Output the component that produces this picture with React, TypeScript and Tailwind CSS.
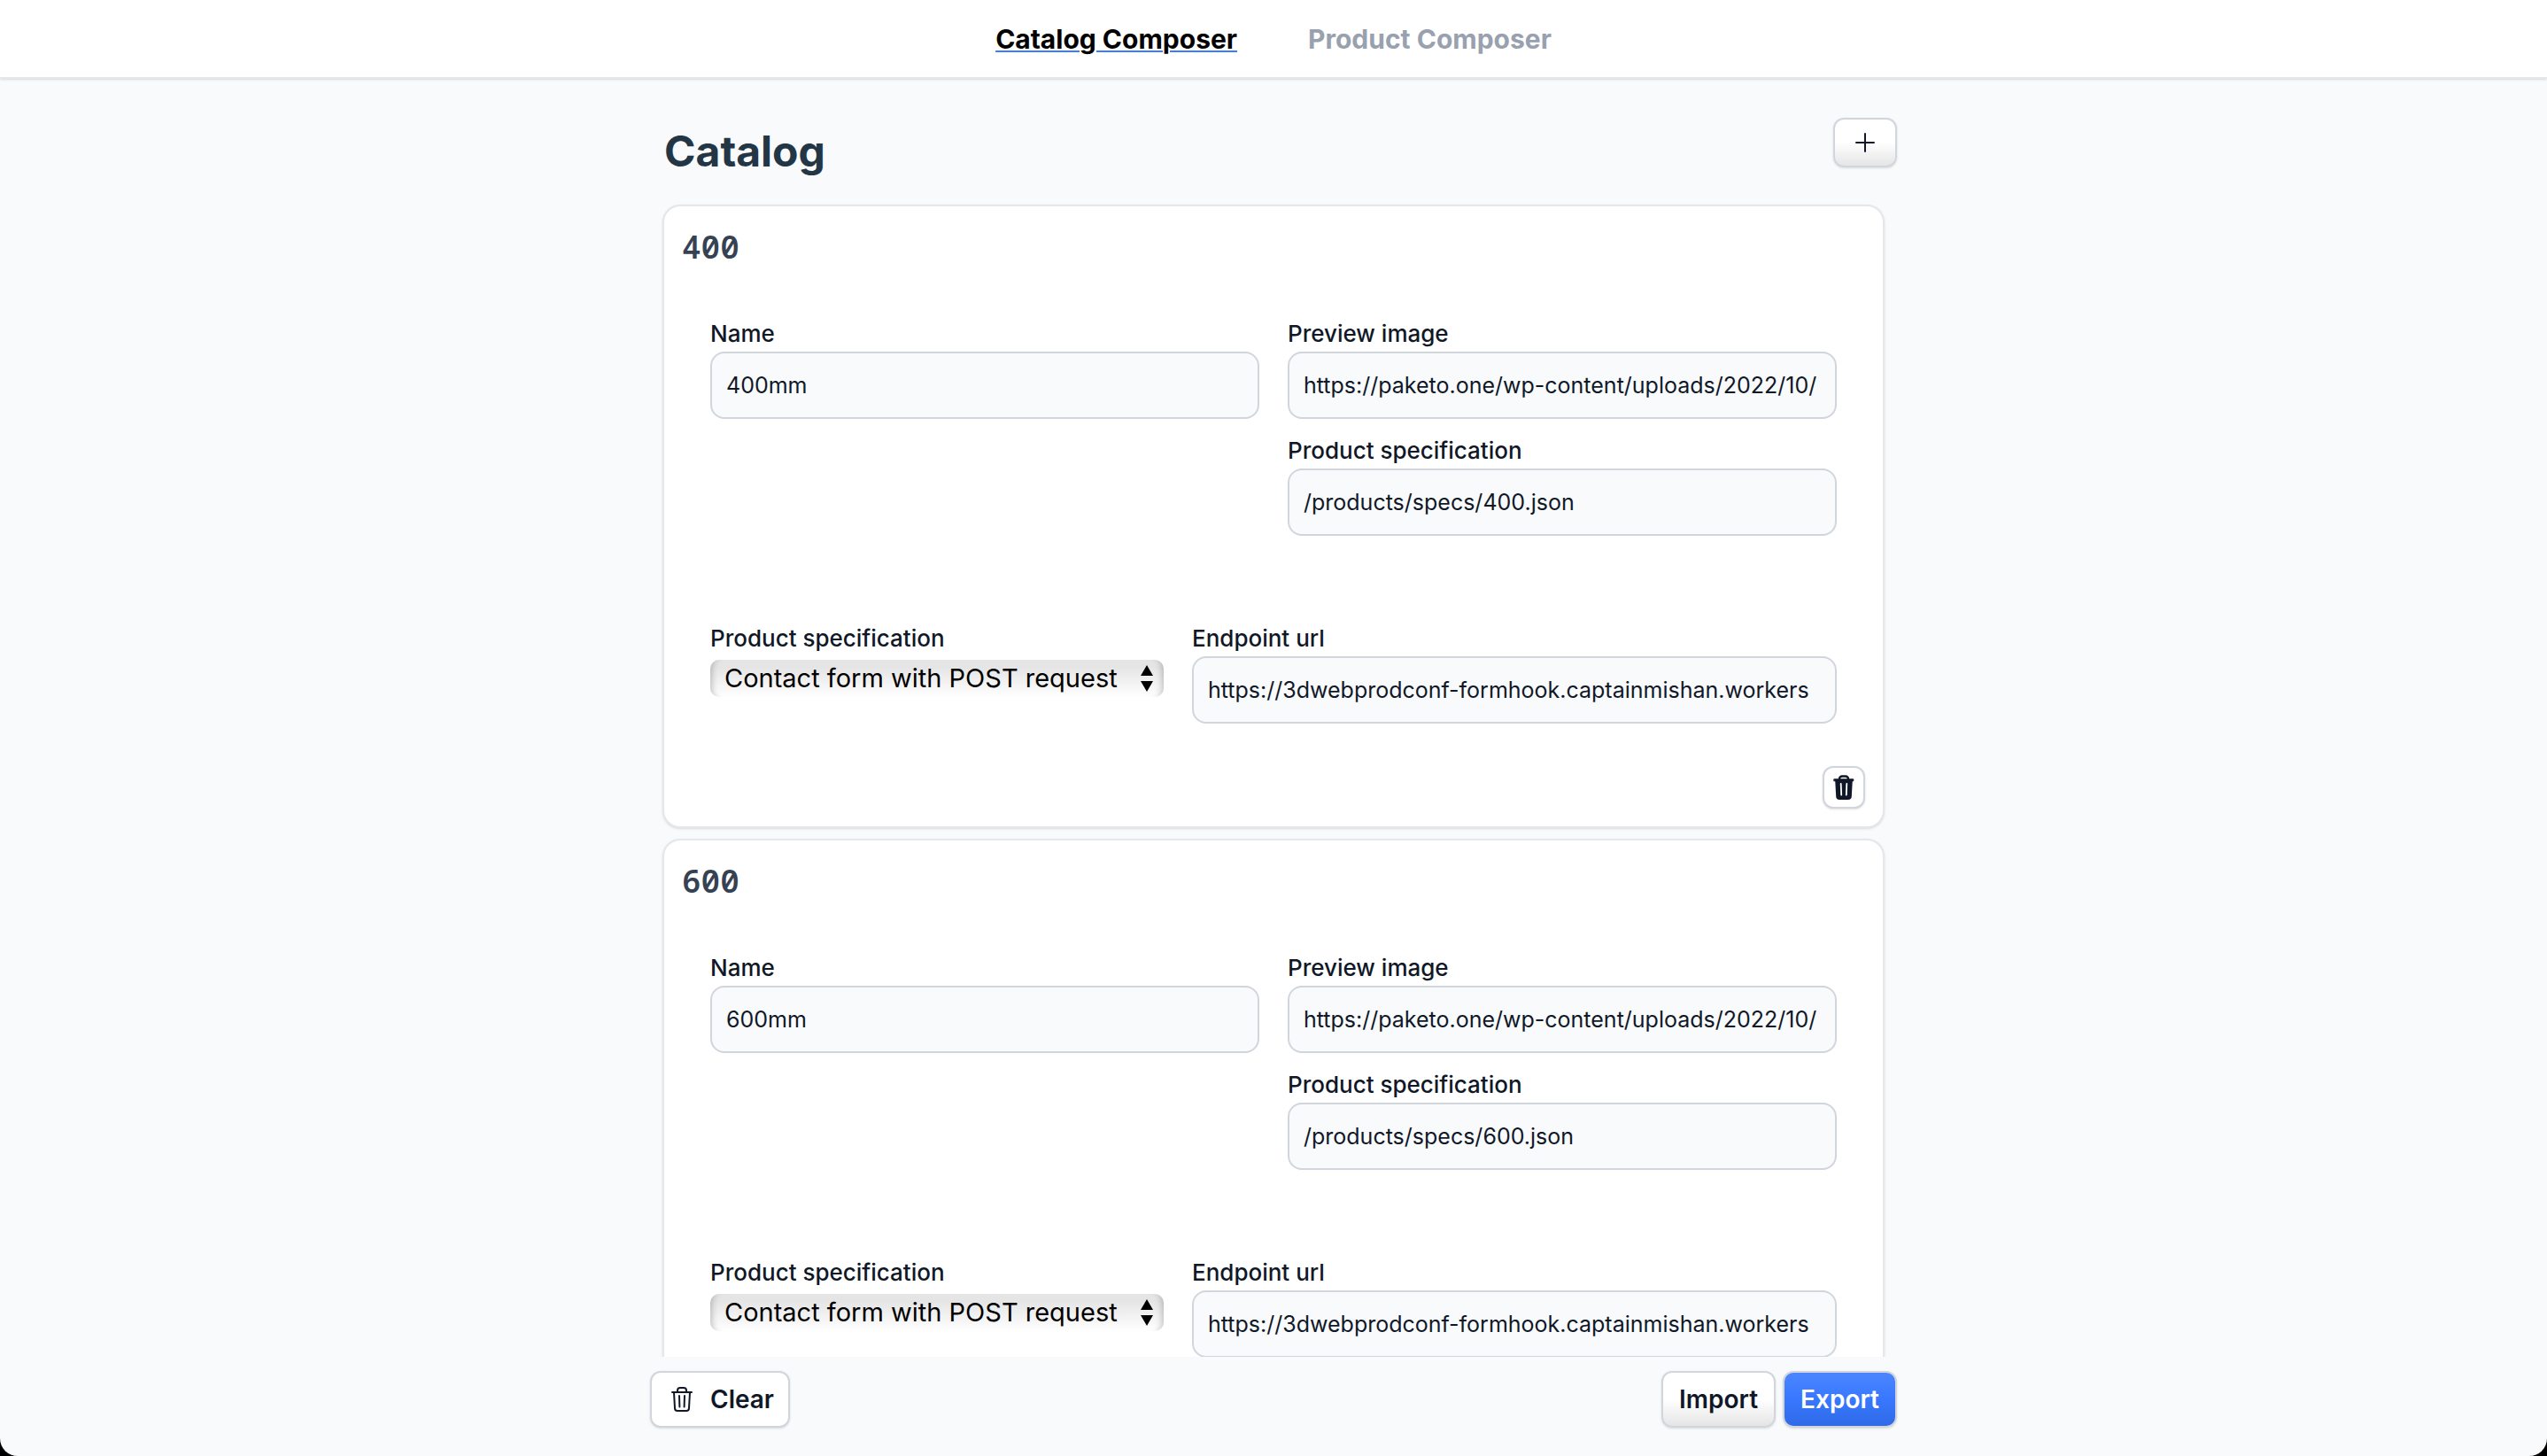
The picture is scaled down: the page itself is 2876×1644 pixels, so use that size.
import { useId, useState } from "react";
import type { ReactNode } from "react";

type Product = { id: string; name: string; preview: string; spec: string; endpoint: string };

const PRODUCTS: Product[] = ["400", "600"].map((id) => ({
  id,
  name: `${id}mm`,
  preview: "https://paketo.one/wp-content/uploads/2022/10/",
  spec: `/products/specs/${id}.json`,
  endpoint: "https://3dwebprodconf-formhook.captainmishan.workers",
}));

function TrashOutline() {
  return (
    <svg viewBox="0 0 24 28" className="h-7 w-6" fill="none" stroke="currentColor" strokeWidth="2" strokeLinecap="round" strokeLinejoin="round" aria-hidden="true">
      <path d="M1 6h22" />
      <path d="M7 6V4a3 3 0 0 1 3-3h4a3 3 0 0 1 3 3v2" />
      <path d="M3 6l1 18a3 3 0 0 0 3 3h10a3 3 0 0 0 3-3l1-18" />
      <path d="M9 10l.4 12.5M15 10l-.4 12.5" />
    </svg>
  );
}

function TrashFilled() {
  return (
    <svg viewBox="0 0 24 28" className="h-7 w-6" fill="none" strokeLinecap="round" strokeLinejoin="round" aria-hidden="true">
      <path d="M7 6V4.500a3 3 0 0 1 3-3h4a3 3 0 0 1 3 3V6" stroke="currentColor" strokeWidth="2.400" />
      <path d="M1.200 4.800h21.600v2H1.200z" fill="currentColor" stroke="currentColor" strokeWidth="1" />
      <path d="M2.200 6h19.600l-1 18.200a4 4 0 0 1-4 3.800H7.200a4 4 0 0 1-4-3.800z" fill="currentColor" />
      <path d="M8.700 10l.5 12.500M15.300 10l-.5 12.500" stroke="#fff" strokeWidth="1.800" />
    </svg>
  );
}

function TextField({ label, value, className = "" }: { label: string; value: string; className?: string }) {
  const id = useId();
  return (
    <div className={`flex min-w-0 flex-col gap-1 ${className}`}>
      <label htmlFor={id} className="text-[26px] leading-8 font-medium">{label}</label>
      <input
        id={id}
        type="text"
        defaultValue={value}
        className="h-[76px] w-full rounded-2xl border-2 border-gray-300 bg-[#f9fafc] px-4 text-[25px] text-gray-900 outline-none"
      />
    </div>
  );
}

function SubmitSelect() {
  const id = useId();
  return (
    <div className="flex min-w-0 flex-col gap-2">
      <label htmlFor={id} className="text-[26px] leading-8 font-medium">Product specification</label>
      <div className="relative h-[42px]">
        <select
          id={id}
          className="h-full w-full appearance-none rounded-[10px] bg-linear-to-b from-[#e5e5e5] from-20% to-white px-4 text-[29px] leading-[42px] text-black shadow-[inset_9px_0_7px_-7px_rgba(0,0,0,0.22),inset_-9px_0_7px_-7px_rgba(0,0,0,0.22)] outline-none"
        >
          <option>Contact form with POST request</option>
        </select>
        <svg viewBox="0 0 14 30" className="pointer-events-none absolute top-1.5 right-3 h-[30px] w-3.5" fill="#000" aria-hidden="true">
          <path d="M7 0l7 12H0zM7 30l7-12H0z" />
        </svg>
      </div>
    </div>
  );
}

function ProductCard({ product, onDelete }: { product: Product; onDelete: () => void }) {
  return (
    <section className="rounded-[20px] border-2 border-gray-200 bg-white px-5 pt-7 pb-5 shadow-sm">
      <h2 className="font-['Noto_Sans_Mono','DejaVu_Sans_Mono',monospace] text-4xl leading-9 font-semibold text-gray-700">{product.id}</h2>
      <div className="mt-16 grid grid-cols-2 gap-x-8 gap-y-5 px-8">
        <TextField label="Name" value={product.name} />
        <TextField label="Preview image" value={product.preview} />
        <TextField label="Product specification" value={product.spec} className="col-start-2" />
      </div>
      <div className="mt-[100px] grid grid-cols-[512fr_728fr] gap-8 px-8">
        <SubmitSelect />
        <TextField label="Endpoint url" value={product.endpoint} />
      </div>
      <div className="mt-12 flex justify-end">
        <button type="button" aria-label={`Delete ${product.id}`} onClick={onDelete} className="grid size-12 place-items-center rounded-xl border-2 border-gray-300 bg-white shadow-sm">
          <TrashFilled />
        </button>
      </div>
    </section>
  );
}

function ActionButton({ className, children, onClick }: { className: string; children: ReactNode; onClick?: () => void }) {
  return (
    <button type="button" onClick={onClick} className={`flex h-16 items-center rounded-xl border-2 border-gray-300 text-[28px] font-semibold shadow-sm ${className}`}>
      {children}
    </button>
  );
}

export default function App() {
  const [products, setProducts] = useState(PRODUCTS);
  return (
    <div className="h-screen bg-black">
      <div className="flex h-full flex-col overflow-hidden rounded-b-[20px] bg-[#f9fafc] font-['Inter',sans-serif] text-gray-900">
        <header className="z-10 border-b-2 border-gray-200 bg-white shadow-sm">
          <nav className="flex h-[87px] items-center justify-center gap-20 text-3xl font-bold">
            <a href="#catalog" aria-current="page" className="text-black underline decoration-[#3b7cff] decoration-2 underline-offset-2">Catalog Composer</a>
            <a href="#product" className="text-gray-400">Product Composer</a>
          </nav>
        </header>

        <main className="min-h-0 flex-1 overflow-y-auto [scrollbar-width:none]">
          <div className="mx-auto max-w-[1408px] pt-11">
            <div className="flex min-h-[98px] items-start justify-between pl-4">
              <h1 className="mt-3.5 text-5xl leading-none font-bold text-[#233646]">Catalog</h1>
              <button type="button" aria-label="Add product" className="grid h-14 w-[72px] place-items-center rounded-xl border-2 border-gray-300 bg-linear-to-b from-white from-50% to-[#e5e5e5] shadow-sm">
                <svg viewBox="0 0 22 22" className="size-[22px]" stroke="currentColor" strokeWidth="2" strokeLinecap="round" aria-hidden="true">
                  <path d="M11 1v20M1 11h20" />
                </svg>
              </button>
            </div>
            <div className="mx-3.5 flex flex-col gap-3">
              {products.map((p) => (
                <ProductCard key={p.id} product={p} onDelete={() => setProducts(products.filter((q) => q.id !== p.id))} />
              ))}
            </div>
          </div>
        </main>

        <footer className="pt-4 pb-8">
          <div className="mx-auto flex max-w-[1408px] items-center gap-2">
            <ActionButton className="mr-auto gap-5 bg-white pr-4 pl-[22px]" onClick={() => setProducts([])}>
              <TrashOutline />
              Clear
            </ActionButton>
            <ActionButton className="bg-linear-to-b from-white from-50% to-[#e5e5e5] px-[18px]">Import</ActionButton>
            <ActionButton className="bg-linear-to-b from-[#4b86ff] via-[#3878ff] to-[#2f6ae6] px-[18px] text-white">Export</ActionButton>
          </div>
        </footer>
      </div>
    </div>
  );
}
